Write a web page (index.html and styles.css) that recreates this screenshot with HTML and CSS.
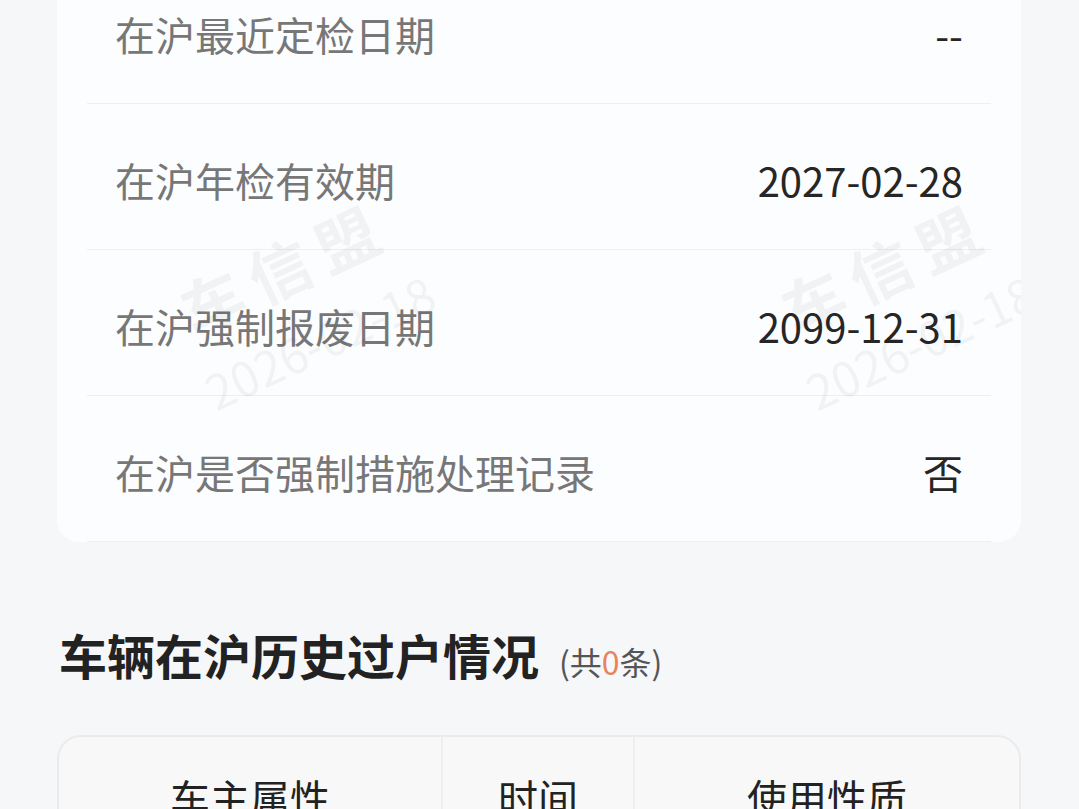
FILE: index.html
```html
<!DOCTYPE html>
<html lang="zh-CN">
<head>
    <meta charset="UTF-8" />
    <meta name="viewport" content="width=device-width, initial-scale=1.0" />
    <title>车辆在沪信息</title>
    <link rel="stylesheet" href="styles.css">
</head>
<body>
    <div class="info-card">
        <div class="row">
            <span class="label">在沪最近定检日期</span>
            <span class="value">--</span>
        </div>
        <div class="row">
            <span class="label">在沪年检有效期</span>
            <span class="value">2027-02-28</span>
        </div>
        <div class="row">
            <span class="label">在沪强制报废日期</span>
            <span class="value">2099-12-31</span>
        </div>
        <div class="row">
            <span class="label">在沪是否强制措施处理记录</span>
            <span class="value">否</span>
        </div>

        <!-- watermark -->
        <div class="watermark wm-left">
            <div class="wm-name">车信盟</div>
            <div class="wm-date">2026-02-18</div>
        </div>
        <div class="watermark wm-right">
            <div class="wm-name">车信盟</div>
            <div class="wm-date">2026-02-18</div>
        </div>
    </div>

    <h2 class="section-title">车辆在沪历史过户情况<span class="count">(共<em>0</em>条)</span></h2>

    <div class="history-table">
        <div class="table-head">
            <div class="cell">车主属性</div>
            <div class="cell">时间</div>
            <div class="cell">使用性质</div>
        </div>
    </div>
</body>
</html>
```

FILE: styles.css
```css
body {
    font-family: "Noto Sans CJK SC", "Noto Sans", sans-serif;
    background: #f6f7f9;
    margin: 0;
    padding: 0 58px 0 57px;
    color: #222;
    overflow: hidden;
}

/* list is scrolled a little past its top */
.info-card {
    position: relative;
    margin-top: -42px;
    background-color: #fcfdfe;
    border-radius: 22px;
    overflow: hidden;
}

.row {
    display: flex;
    justify-content: space-between;
    align-items: center;
    height: 146px;
    box-sizing: border-box;
    padding: 6px 28px 0;
    margin: 0 30px;
    border-bottom: 1px solid #efefef;
    font-size: 40px;
    line-height: 40px;
}

.row:last-of-type {
    border-bottom: none;
}

.label {
    color: #777;
}

.value {
    color: #262626;
}

.watermark {
    position: absolute;
    top: 273px;
    width: 400px;
    text-align: center;
    color: rgba(0, 0, 0, 0.045);
    transform: rotate(-25deg);
    pointer-events: none;
    white-space: nowrap;
}

.wm-left {
    left: 43px;
}

.wm-right {
    left: 644px;
}

.wm-name {
    font-size: 62px;
    line-height: 62px;
    font-weight: bold;
    letter-spacing: 12px;
}

.wm-date {
    font-size: 48px;
    line-height: 48px;
    margin-top: 28px;
}

.section-title {
    margin: 79px 0 0;
    padding-left: 2px;
    font-size: 48px;
    line-height: 67px;
    font-weight: bold;
    color: #222;
}

.count {
    margin-left: 20px;
    font-size: 32px;
    font-weight: normal;
    color: #555;
}

.count em {
    font-style: normal;
    color: #e8845c;
}

.history-table {
    margin-top: 40px;
    border: 2px solid #ebebeb;
    border-radius: 24px;
    overflow: hidden;
    background-color: #f8f8f8;
}

.table-head {
    display: grid;
    grid-template-columns: 2fr 1fr 2fr;
}

.table-head .cell {
    padding: 40px 0;
    font-size: 40px;
    line-height: 40px;
    text-align: center;
    color: #222;
    border-right: 2px solid #efefef;
}

.table-head .cell:last-child {
    border-right: none;
}
```
